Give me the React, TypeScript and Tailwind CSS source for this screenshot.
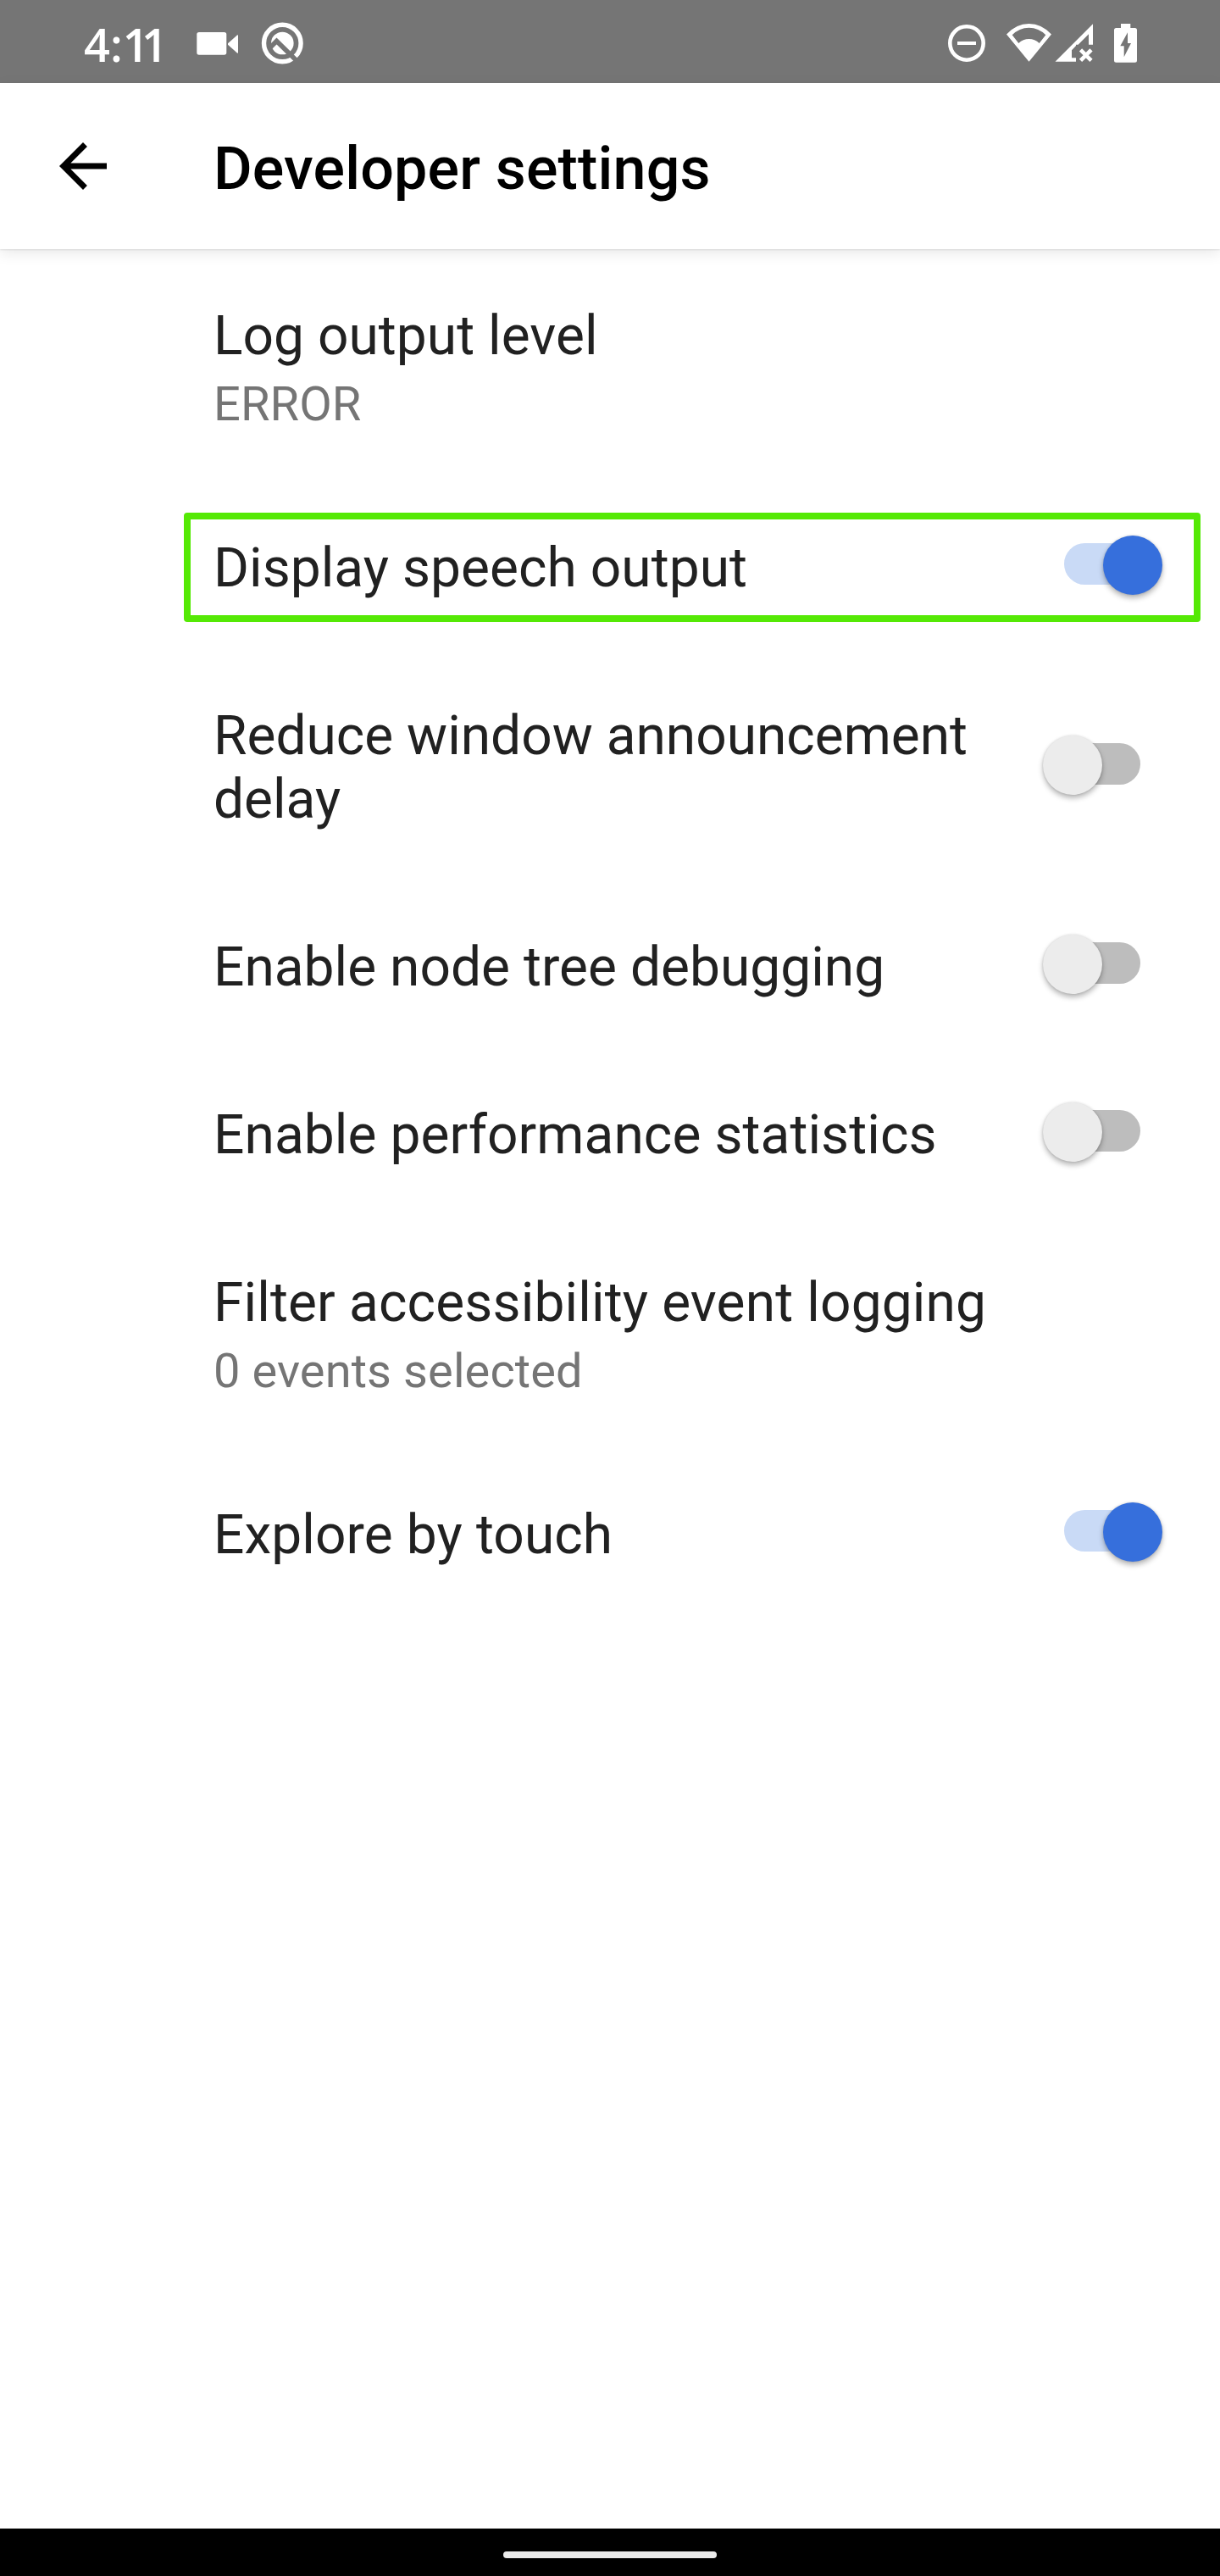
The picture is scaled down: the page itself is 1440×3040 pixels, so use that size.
import type { ReactNode } from "react";

type Row = {
  title: string;
  tracking: string;
  summary?: string;
  toggle?: boolean;
  highlighted?: boolean;
};

const rows: Row[] = [
  { title: "Log output level", tracking: "tracking-[0.05px]", summary: "ERROR" },
  { title: "Display speech output", tracking: "tracking-[0.05px]", toggle: true, highlighted: true },
  { title: "Reduce window announcement delay", tracking: "tracking-normal", toggle: false },
  { title: "Enable node tree debugging", tracking: "tracking-[0.03px]", toggle: false },
  { title: "Enable performance statistics", tracking: "tracking-[0.08px]", toggle: false },
  { title: "Filter accessibility event logging", tracking: "tracking-[0.15px]", summary: "0 events selected" },
  { title: "Explore by touch", tracking: "tracking-[0.1px]", toggle: true },
];

function Icon({ x, w, className, children }: { x: number; w: number; className: string; children: ReactNode }) {
  return (
    <svg viewBox={`${x} 0 ${w} 98`} width={w} height={98} fill="#fff" className={`shrink-0 ${className}`}>
      {children}
    </svg>
  );
}

function StatusBar() {
  return (
    <div className="flex h-[98px] items-start bg-[#757575] pl-[99px]">
      <div className="w-[133px] pt-[15px] font-['Open_Sans',sans-serif] text-[54px] font-semibold leading-[74px] text-white">
        4:<span className="tracking-[-8.5px]">1</span>1
      </div>
      <Icon x={232} w={50} className="">
        <rect x="232.3" y="38" width="35" height="26.7" rx="2.6" />
        <path d="M269 51.300L279.900 41.500Q281 40.700 281 42V62Q281 63.300 279.900 62.500L269 52.700Z" />
      </Icon>
      <Icon x={308} w={52} className="ml-[26px]">
        <circle cx="333.300" cy="51" r="21.800" fill="none" stroke="#fff" strokeWidth="5.400" />
        <circle cx="333.300" cy="51" r="13.300" />
        <path d="M318 57L326.500 48.500L352 73.500" fill="none" stroke="#757575" strokeWidth="5.600" />
      </Icon>
      <Icon x={1118} w={46} className="ml-[758px]">
        <circle cx="1141" cy="51" r="19.700" fill="none" stroke="#fff" strokeWidth="4.600" />
        <rect x="1130" y="49" width="22" height="4" />
      </Icon>
      <Icon x={1187} w={56} className="ml-[23px]">
        <path
          fillRule="evenodd"
          d="M1214.500 72.700L1188 40.500Q1199.500 28 1214.500 28T1241 40.500ZM1202.300 51Q1207.500 46 1214.500 46T1226.700 51L1234.300 41.300Q1226 32.700 1214.500 32.700T1194.700 41.300Z"
        />
      </Icon>
      <Icon x={1245} w={46} className="ml-[2px]">
        <path d="M1245.500 72.700L1290 28.300V52.700H1285V40.200L1272.500 52.700H1270V54L1265 59.300V68.300H1270V72.700Z" />
        <path d="M1275.500 58.800L1288 71.300M1288 58.800L1275.500 71.300" stroke="#fff" strokeWidth="4.600" />
      </Icon>
      <Icon x={1315} w={27} className="ml-[24px]">
        <path
          fillRule="evenodd"
          d="M1323 28h11.300v5H1339.500q2.500 0 2.500 2.500V71.200q0 2.500-2.500 2.500H1317.500q-2.500 0-2.500-2.500V35.500q0-2.500 2.500-2.500H1323zM1331 38.300L1322.300 54.300H1326.700V67.300L1335 51H1331z"
        />
      </Icon>
    </div>
  );
}

function AppBar() {
  return (
    <header className="relative z-10 flex h-[196px] items-center bg-white pl-14 shadow-[0_1px_2px_rgba(0,0,0,0.1),0_5px_16px_rgba(0,0,0,0.09)]">
      <svg viewBox="0 0 24 24" className="size-[84px] fill-black">
        <path d="M20 11H7.83l5.590-5.590L12 4l-8 8 8 8 1.410-1.410L7.830 13H20v-2z" />
      </svg>
      <h1 className="ml-28 pt-[6px] text-[70px] font-medium leading-[82px] tracking-[0.17px] text-black">Developer settings</h1>
    </header>
  );
}

function Toggle({ on }: { on: boolean }) {
  return (
    <div className={`relative mb-2 h-[70px] shrink-0 ${on ? "mr-[68px] w-[116px]" : "mr-[94px] w-[115px]"}`}>
      <div
        className={`absolute top-[9px] h-[49px] w-[112px] rounded-full ${on ? "left-0 bg-[#c9daf6]" : "right-0 bg-[#bdbdbd]"}`}
      />
      <div
        className={`absolute top-0 size-[70px] rounded-full shadow-[0_4px_6px_rgba(0,0,0,0.28),0_0_3px_rgba(0,0,0,0.14)] ${on ? "right-0 bg-[#366fdc]" : "left-0 bg-[#ececec]"}`}
      />
    </div>
  );
}

function SettingRow({ row }: { row: Row }) {
  return (
    <li className="relative flex items-center justify-between pl-[252px]">
      {row.highlighted && (
        <div className="absolute left-[217px] top-[33px] h-[129px] w-[1200px] rounded-[4px] border-8 border-[#55e905]" />
      )}
      <div className="pt-[61px] pb-[62px]">
        <div className={`text-[64px] leading-[75px] text-[#212121] ${row.tracking} ${row.summary ? "" : "max-w-[920px]"}`}>
          {row.title}
        </div>
        {row.summary && <div className="mt-[10px] text-[56px] leading-[66px] tracking-[0.1px] text-[#757575]">{row.summary}</div>}
      </div>
      {row.toggle !== undefined && <Toggle on={row.toggle} />}
    </li>
  );
}

export default function App() {
  return (
    <div className="flex h-[3040px] w-[1440px] flex-col overflow-hidden bg-white font-[Roboto,sans-serif]">
      <StatusBar />
      <AppBar />
      <ul className="flex-1 pt-1">
        {rows.map((row) => (
          <SettingRow key={row.title} row={row} />
        ))}
      </ul>
      <div className="flex h-14 justify-center bg-black pt-[27px]">
        <div className="h-2 w-[252px] rounded-full bg-[#ebebeb]" />
      </div>
    </div>
  );
}
